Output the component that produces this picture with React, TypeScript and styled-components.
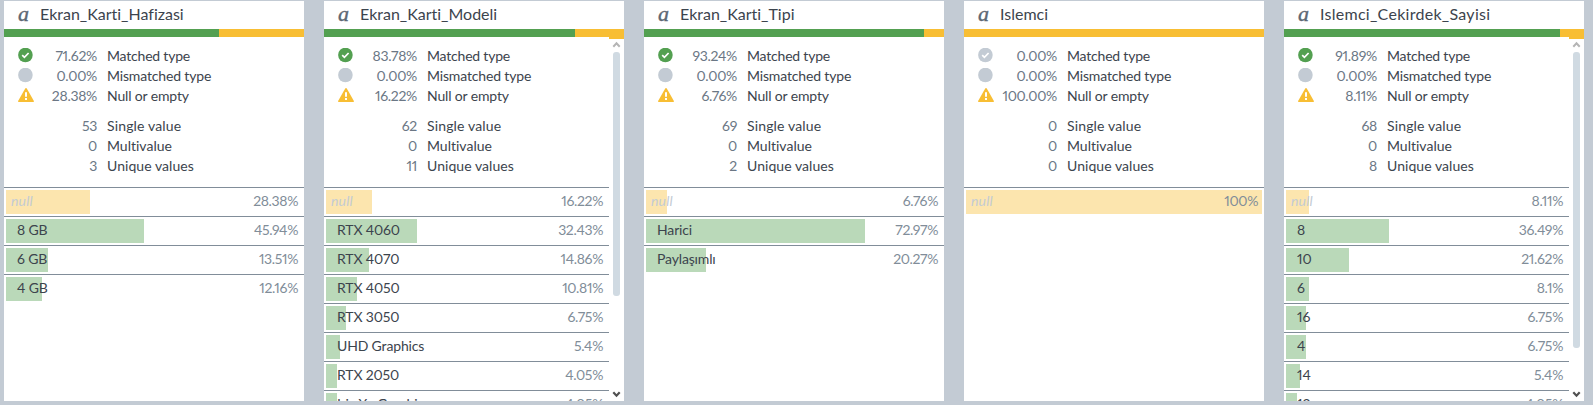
import React from "react";
import styled, { createGlobalStyle } from "styled-components";

const Global = createGlobalStyle`
  * { box-sizing: border-box; }
  body { margin: 0; background: #c3cbd4; overflow: hidden; }
`;

const Board = styled.main`
  display: flex;
  gap: 20px;
  height: 405px;
  padding: 1px 0 4px 4px;
  background: #c3cbd4;
  color: #3c444d;
  font: 14px/20px Lato, "Liberation Sans", sans-serif;
  font-variant-numeric: proportional-nums;
  font-variant-ligatures: none;
`;

const Panel = styled.section`
  display: flex;
  flex-direction: column;
  flex: 0 0 300px;
  height: 400px;
  overflow: hidden;
  background: #fff;
`;

const Header = styled.header`
  display: flex;
  flex: 0 0 28px;
  height: 28px;
  padding-left: 14px;
`;

const TypeGlyph = styled.span`
  width: 22px;
  color: #5c6773;
  font: italic 22px/25px "Liberation Serif", serif;
  -webkit-text-stroke: 0.4px #5c6773;
`;

const Title = styled.h2<{ $spacing: number }>`
  margin: 0;
  font-size: 16px;
  font-weight: 400;
  line-height: 26px;
  letter-spacing: ${(p) => p.$spacing}px;
`;

const Quality = styled.div`
  display: flex;
  flex: 0 0 8px;
  background: #f8be34;
`;

const QualityMatched = styled.div<{ $share: number }>`
  width: ${(p) => p.$share}%;
  background: #53a051;
`;

const Body = styled.div`
  display: flex;
  flex: 1;
  min-height: 0;
`;

const Content = styled.div`
  flex: 1;
  min-width: 0;
  overflow: hidden;
`;

const Stats = styled.div`
  display: grid;
  grid-template-columns: 24px 55px 1fr;
  grid-template-rows: 20px 20px 30px 20px 20px 20px;
  padding: 9px 0 11px 14px;
`;

const IconCell = styled.span`
  display: flex;
  padding-top: 2px;
`;

const StatValue = styled.span`
  justify-self: end;
  color: #6b7785;
  letter-spacing: -0.3px;
`;

const StatLabel = styled.span<{ $spacing: number }>`
  padding-left: 10px;
  letter-spacing: ${(p) => p.$spacing}px;
  white-space: nowrap;
`;

const ValueRow = styled.div`
  display: grid;
  grid-template-columns: minmax(0, 1fr) auto;
  height: 29px;
  padding: 2px 2px;
  border-top: 1px solid #818d99;
  line-height: 22px;
`;

const Bar = styled.div<{ $null?: boolean }>`
  grid-area: 1 / 1 / 2 / 3;
  height: 24px;
  max-width: 100%;
  background: ${(p) => (p.$null ? "#fce5ae" : "#bad9b9")};
`;

const ValueName = styled.span<{ $null?: boolean }>`
  grid-area: 1 / 1;
  padding-left: ${(p) => (p.$null ? 5 : 11)}px;
  color: ${(p) => (p.$null ? "#c3cbd4" : "#3c444d")};
  font-style: ${(p) => (p.$null ? "italic" : "normal")};
  letter-spacing: ${(p) => (p.$null ? 0.2 : -0.15)}px;
  white-space: nowrap;
`;

const ValueShare = styled.span`
  grid-area: 1 / 2;
  padding-right: 4px;
  color: #818d99;
  letter-spacing: -0.35px;
`;

const Scrollbar = styled.div`
  display: flex;
  flex: 0 0 15px;
  flex-direction: column;
  align-items: center;
  border-top: 2px solid #f8be34;
`;

const Arrow = styled.svg`
  display: block;
  flex: 0 0 13px;
  width: 15px;
  height: 13px;
`;

const Track = styled.div`
  flex: 1;
`;

const Thumb = styled.div<{ $height: number }>`
  width: 7px;
  height: ${(p) => p.$height}px;
  border-radius: 3px;
  background: #d0dae2;
`;

const CheckIcon = ({ active }: { active: boolean }) => (
  <svg width="15" height="15" viewBox="0 0 15 15">
    <circle cx="7.4" cy="7" r="7.3" fill={active ? "#53a051" : "#c3cbd4"} />
    <path d="M4.2 7.2 6.4 9.3 10.6 5" fill="none" stroke="#fff" strokeWidth="1.7" />
  </svg>
);

const CircleIcon = () => (
  <svg width="15" height="15" viewBox="0 0 15 15">
    <circle cx="7.4" cy="7" r="7.3" fill="#c3cbd4" />
  </svg>
);

const WarningIcon = () => (
  <svg width="16" height="15" viewBox="0 0 16 15">
    <path d="M7.2.6Q8 -.5 8.8.6L15.9 12.9Q16.3 14 15.2 14H.8Q-.3 14 .1 12.9Z" fill="#f8be34" />
    <path d="M8 4.2V8.7M8 10V12" stroke="#fff" strokeWidth="2" />
  </svg>
);

type Value = [name: string, share: string];
interface Field {
  name: string;
  spacing: number;
  matched: number;
  empty: string;
  counts: [number, number, number];
  values: Value[];
  thumb?: number;
}

const fields: Field[] = [
  { name: "Ekran_Karti_Hafizasi", spacing: 0, matched: 71.62, empty: "28.38", counts: [53, 0, 3],
    values: [["null", "28.38"], ["8 GB", "45.94"], ["6 GB", "13.51"], ["4 GB", "12.16"]] },
  { name: "Ekran_Karti_Modeli", spacing: 0, matched: 83.78, empty: "16.22", counts: [62, 0, 11], thumb: 244,
    values: [["null", "16.22"], ["RTX 4060", "32.43"], ["RTX 4070", "14.86"], ["RTX 4050", "10.81"], ["RTX 3050", "6.75"],
      ["UHD Graphics", "5.4"], ["RTX 2050", "4.05"], ["Iris Xe Graphics", "4.05"]] },
  { name: "Ekran_Karti_Tipi", spacing: 0, matched: 93.24, empty: "6.76", counts: [69, 0, 2],
    values: [["null", "6.76"], ["Harici", "72.97"], ["Paylaşımlı", "20.27"]] },
  { name: "Islemci", spacing: 0, matched: 0, empty: "100.00", counts: [0, 0, 0], values: [["null", "100"]] },
  { name: "Islemci_Cekirdek_Sayisi", spacing: 0.28, matched: 91.89, empty: "8.11", counts: [68, 0, 8], thumb: 296,
    values: [["null", "8.11"], ["8", "36.49"], ["10", "21.62"], ["6", "8.1"], ["16", "6.75"], ["4", "6.75"], ["14", "5.4"], ["12", "4.05"]] },
];

function FieldPanel({ field }: { field: Field }) {
  const width = field.thumb ? 285 : 300;
  const stats: [React.ReactNode, string, string, number][] = [
    [<CheckIcon active={field.matched > 0} />, field.matched.toFixed(2) + "%", "Matched type", -0.2],
    [<CircleIcon />, "0.00%", "Mismatched type", -0.15],
    [<WarningIcon />, field.empty + "%", "Null or empty", -0.15],
    [null, String(field.counts[0]), "Single value", 0.15],
    [null, String(field.counts[1]), "Multivalue", 0],
    [null, String(field.counts[2]), "Unique values", 0.05],
  ];
  return (
    <Panel>
      <Header>
        <TypeGlyph>a</TypeGlyph>
        <Title $spacing={field.spacing}>{field.name}</Title>
      </Header>
      <Quality>
        <QualityMatched $share={field.matched} />
      </Quality>
      <Body>
        <Content>
          <Stats>
            {stats.map(([icon, value, label, spacing]) => (
              <React.Fragment key={label}>
                <IconCell>{icon}</IconCell>
                <StatValue>{value}</StatValue>
                <StatLabel $spacing={spacing}>{label}</StatLabel>
              </React.Fragment>
            ))}
          </Stats>
          {field.values.map(([name, share]) => (
            <ValueRow key={name}>
              <Bar $null={name === "null"} style={{ width: Math.round((Math.round(+share) * width) / 100) }} />
              <ValueName $null={name === "null"}>{name}</ValueName>
              <ValueShare>{share}%</ValueShare>
            </ValueRow>
          ))}
        </Content>
        {field.thumb && (
          <Scrollbar>
            <Arrow viewBox="0 0 15 13">
              <path d="M4.3 7.7 7.5 4.3 10.7 7.7" fill="none" stroke="#b5b5b5" strokeWidth="2" />
            </Arrow>
            <Track>
              <Thumb $height={field.thumb} />
            </Track>
            <Arrow viewBox="0 0 15 13">
              <path d="M4.3 4.3 7.5 7.7 10.7 4.3" fill="none" stroke="#505050" strokeWidth="2.2" />
            </Arrow>
          </Scrollbar>
        )}
      </Body>
    </Panel>
  );
}

export default function App() {
  return (
    <>
      <Global />
      <Board>
        {fields.map((field) => (
          <FieldPanel key={field.name} field={field} />
        ))}
      </Board>
    </>
  );
}
